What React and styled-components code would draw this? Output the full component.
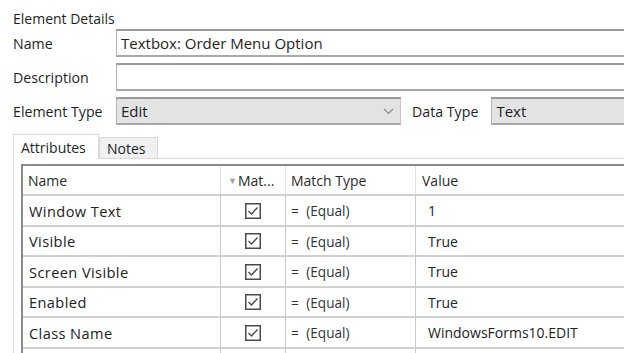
import styled, { createGlobalStyle } from 'styled-components'

const Global = createGlobalStyle`
    html, body {
        margin: 0;
        padding: 0;
        background: #fff;
        overflow: hidden;
    }
    body {
        font-family: "Open Sans", "Noto Sans", sans-serif;
        color: #1e1e1e;
    }
`

const Page = styled.div`
    width: 624px;
    height: 353px;
    padding: 10px 0 0 13px;
    box-sizing: border-box;
    overflow: hidden;
`

const Title = styled.div`
    font-size: 14px;
    line-height: 18px;
    height: 18px;
`

const Form = styled.div`
    display: grid;
    grid-template-columns: 103px 1fr;
    grid-auto-rows: 28px;
    row-gap: 6px;
    margin-top: 1px;
    margin-right: -4px;
`

const Label = styled.div`
    font-size: 14.2px;
    display: flex;
    align-items: center;
`

const Field = styled.div`
    display: flex;
    align-items: center;
    padding-left: 4px;
    font-size: 15px;
    background: ${p => (p.$gray ? '#e3e3e3' : '#fff')};
    border: 1px solid #b4b4b4;
    border-top: 2px solid #9a9a9a;
    border-bottom: 2px solid #a8a8a8;
    border-right: ${p => (p.$open ? 'none' : '1px solid #c4c4c4')};
    box-sizing: border-box;
`

const TypeRow = styled.div`
    display: flex;
    align-items: stretch;
`

const Select = styled(Field)`
    width: ${p => p.$w || 'auto'};
    flex: ${p => (p.$w ? 'none' : '1')};
    justify-content: space-between;
    padding-right: 6px;
`

const Chevron = styled.span`
    display: flex;
`

const InlineLabel = styled(Label)`
    padding: 0 13px 0 11px;
`

const Tabs = styled.div`
    display: flex;
    align-items: flex-end;
    margin-top: 8px;
    height: 25px;
`

const Tab = styled.div`
    font-size: 14px;
    width: ${p => p.$w};
    height: ${p => (p.$active ? '25px' : '21px')};
    padding-left: 7px;
    display: flex;
    align-items: center;
    box-sizing: border-box;
    background: ${p => (p.$active ? '#fff' : '#f0f0f0')};
    border: 1px solid #dadada;
    border-bottom: none;
    margin-bottom: ${p => (p.$active ? '-1px' : '0')};
    position: relative;
    z-index: ${p => (p.$active ? 1 : 0)};
`

const Panel = styled.div`
    border-top: 1px solid #d9d9d9;
    border-left: 1px solid #d9d9d9;
    padding: 5px 0 0 7px;
`

const Table = styled.div`
    display: grid;
    grid-template-columns: 197px 65px 130px 1fr;
    grid-template-rows: 28px 31px 30px 31px 30px 31px 31px;
    border-top: 2px solid #8a8a8a;
    border-left: 2px solid #8a8a8a;
`

const Head = styled.div`
    font-size: 14px;
    display: flex;
    align-items: center;
    padding-left: ${p => p.$pad || '5px'};
    border-left: ${p => (p.$first ? 'none' : '1px solid #e2e2e2')};
    color: #2a2a2a;
`

const Funnel = styled.span`
    color: #a0a0a0;
    font-size: 9px;
    margin-right: 1px;
`

const Cell = styled.div`
    font-size: ${p => (p.$value ? '14px' : '14.6px')};
    letter-spacing: ${p => (p.$value ? '0' : '0.4px')};
    display: flex;
    align-items: center;
    justify-content: ${p => (p.$center ? 'center' : 'flex-start')};
    padding-left: ${p => p.$pad || '0'};
    border-top: 2px solid #d0d0d0;
    border-left: ${p => (p.$first ? 'none' : '1px solid #c8c8c8')};
    box-sizing: border-box;
    color: #222;
`

const MatchText = styled.span`
    font-size: 13.6px;
    letter-spacing: 0;
    color: #333;
    word-spacing: 4px;
`

const Check = () => (
    <svg width="16" height="16" viewBox="0 0 16 16">
        <rect x="0.75" y="0.75" width="14.5" height="14.5" fill="#fff" stroke="#4a4a4a" strokeWidth="1.5" />
        <path d="M3.5 8 L6.5 11 L12.5 4.5" fill="none" stroke="#4a4a4a" strokeWidth="1.4" />
    </svg>
)

const rows = [
    { name: 'Window Text', value: '1' },
    { name: 'Visible', value: 'True' },
    { name: 'Screen Visible', value: 'True' },
    { name: 'Enabled', value: 'True' },
    { name: 'Class Name', value: 'WindowsForms10.EDIT' },
    { name: '', value: '' },
]

const App = () => {
    return (
        <Page>
            <Global />
            <Title>Element Details</Title>
            <Form>
                <Label>Name</Label>
                <Field $open>Textbox: Order Menu Option</Field>
                <Label>Description</Label>
                <Field $open />
                <Label>Element Type</Label>
                <TypeRow>
                    <Select $gray $w="285px">
                        <span>Edit</span>
                        <Chevron>
                            <svg width="11" height="7" viewBox="0 0 11 7">
                                <path d="M1 1 L5.5 5.5 L10 1" fill="none" stroke="#8a8a8a" strokeWidth="1.2" />
                            </svg>
                        </Chevron>
                    </Select>
                    <InlineLabel>Data Type</InlineLabel>
                    <Select $gray $open>Text</Select>
                </TypeRow>
            </Form>
            <Tabs>
                <Tab $active $w="86px">Attributes</Tab>
                <Tab $w="59px">Notes</Tab>
            </Tabs>
            <Panel>
                <Table>
                    <Head $first>Name</Head>
                    <Head $pad="7px"><Funnel>▼</Funnel>Mat...</Head>
                    <Head>Match Type</Head>
                    <Head $pad="6px">Value</Head>
                    {rows.map((r, i) => [
                        <Cell key={'n' + i} $first $pad="6px">{r.name}</Cell>,
                        <Cell key={'c' + i} $center>{r.name && <Check />}</Cell>,
                        <Cell key={'m' + i} $pad="5px">{r.name && <MatchText>= (Equal)</MatchText>}</Cell>,
                        <Cell key={'v' + i} $value $pad="12px">{r.value}</Cell>,
                    ])}
                </Table>
            </Panel>
        </Page>
    )
}

export default App
